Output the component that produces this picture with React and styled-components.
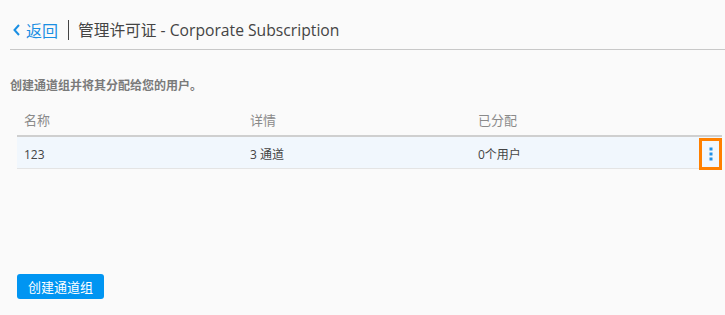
import React from 'react';
import styled, { createGlobalStyle } from 'styled-components';

const GlobalStyle = createGlobalStyle`
  html, body {
    margin: 0;
    padding: 0;
    background: #fafafa;
    font-family: "Open Sans", "Noto Sans CJK SC", sans-serif;
  }
`;

const Page = styled.div`
  width: 725px;
  height: 315px;
  display: flex;
  flex-direction: column;
  overflow: hidden;
`;

const Header = styled.div`
  box-sizing: border-box;
  margin-left: 10px;
  height: 50px;
  padding-top: 10px;
  display: flex;
  align-items: center;
  border-bottom: 1px solid #c8c8c8;
`;

const Back = styled.a`
  display: flex;
  align-items: center;
  gap: 6px;
  padding-left: 3px;
  color: #1a8fe3;
  font-size: 16px;
  cursor: pointer;
`;

const Divider = styled.span`
  width: 1px;
  height: 20px;
  background: #444;
  margin: 0 9px 0 10px;
`;

const Title = styled.h1`
  margin: 0;
  font-size: 15.7px;
  font-weight: 400;
  color: #444;
`;

const Intro = styled.p`
  margin: 26px 0 0 10px;
  font-size: 12px;
  font-weight: 700;
  color: #7a7a7a;
`;

const Table = styled.div`
  margin: 9px 3px 0 17px;
`;

const Row = styled.div`
  display: grid;
  grid-template-columns: 226px 228px 1fr 23px;
  align-items: center;
  height: ${({ head }) => (head ? '32px' : '31px')};
  background: ${({ head }) => (head ? 'transparent' : '#f1f7fd')};
  border-bottom: ${({ head }) => (head ? '2px solid #cfcfcf' : '1px solid #e4e4e4')};
`;

const Cell = styled.div`
  padding-left: 7px;
  font-size: ${({ head }) => (head ? '13px' : '12px')};
  color: ${({ head }) => (head ? '#8a8a8a' : '#444')};
  padding-top: ${({ head }) => (head ? '0' : '1px')};
`;

const MenuButton = styled.button`
  box-sizing: border-box;
  width: 23px;
  height: 32px;
  margin-top: 1px;
  border: 3px solid #ff8000;
  background: transparent;
  padding: 0;
  display: flex;
  align-items: center;
  justify-content: center;
  cursor: pointer;
`;

const Spacer = styled.div`
  flex: 1;
`;

const CreateButton = styled.button`
  margin: 0 0 16px 17px;
  width: 87px;
  height: 25px;
  border: none;
  border-radius: 3px;
  background: #0095f2;
  color: #fff;
  font-family: "Open Sans", "Noto Sans CJK SC", sans-serif;
  font-size: 13px;
  padding: 0;
  cursor: pointer;
`;

const Chevron = () => (
  <svg width="7" height="12" viewBox="0 0 7 12">
    <path d="M6 1 L1.5 6 L6 11" fill="none" stroke="#1a8fe3" strokeWidth="2" />
  </svg>
);

const Dots = () => (
  <svg width="4" height="14" viewBox="0 0 4 14">
    <rect x="0.5" y="0.5" width="3" height="3" fill="#1e90e8" />
    <rect x="0.5" y="5.5" width="3" height="3" fill="#1e90e8" />
    <rect x="0.5" y="10.5" width="3" height="3" fill="#1e90e8" />
  </svg>
);

const groups = [{ name: '123', detail: '3 通道', assigned: '0个用户' }];

export default function App() {
  return (
    <Page>
      <GlobalStyle />
      <Header>
        <Back>
          <Chevron />
          返回
        </Back>
        <Divider />
        <Title>管理许可证 - Corporate Subscription</Title>
      </Header>
      <Intro>创建通道组并将其分配给您的用户。</Intro>
      <Table>
        <Row head>
          <Cell head>名称</Cell>
          <Cell head>详情</Cell>
          <Cell head>已分配</Cell>
          <div />
        </Row>
        {groups.map((g) => (
          <Row key={g.name}>
            <Cell>{g.name}</Cell>
            <Cell>{g.detail}</Cell>
            <Cell>{g.assigned}</Cell>
            <MenuButton>
              <Dots />
            </MenuButton>
          </Row>
        ))}
      </Table>
      <Spacer />
      <CreateButton>创建通道组</CreateButton>
    </Page>
  );
}
